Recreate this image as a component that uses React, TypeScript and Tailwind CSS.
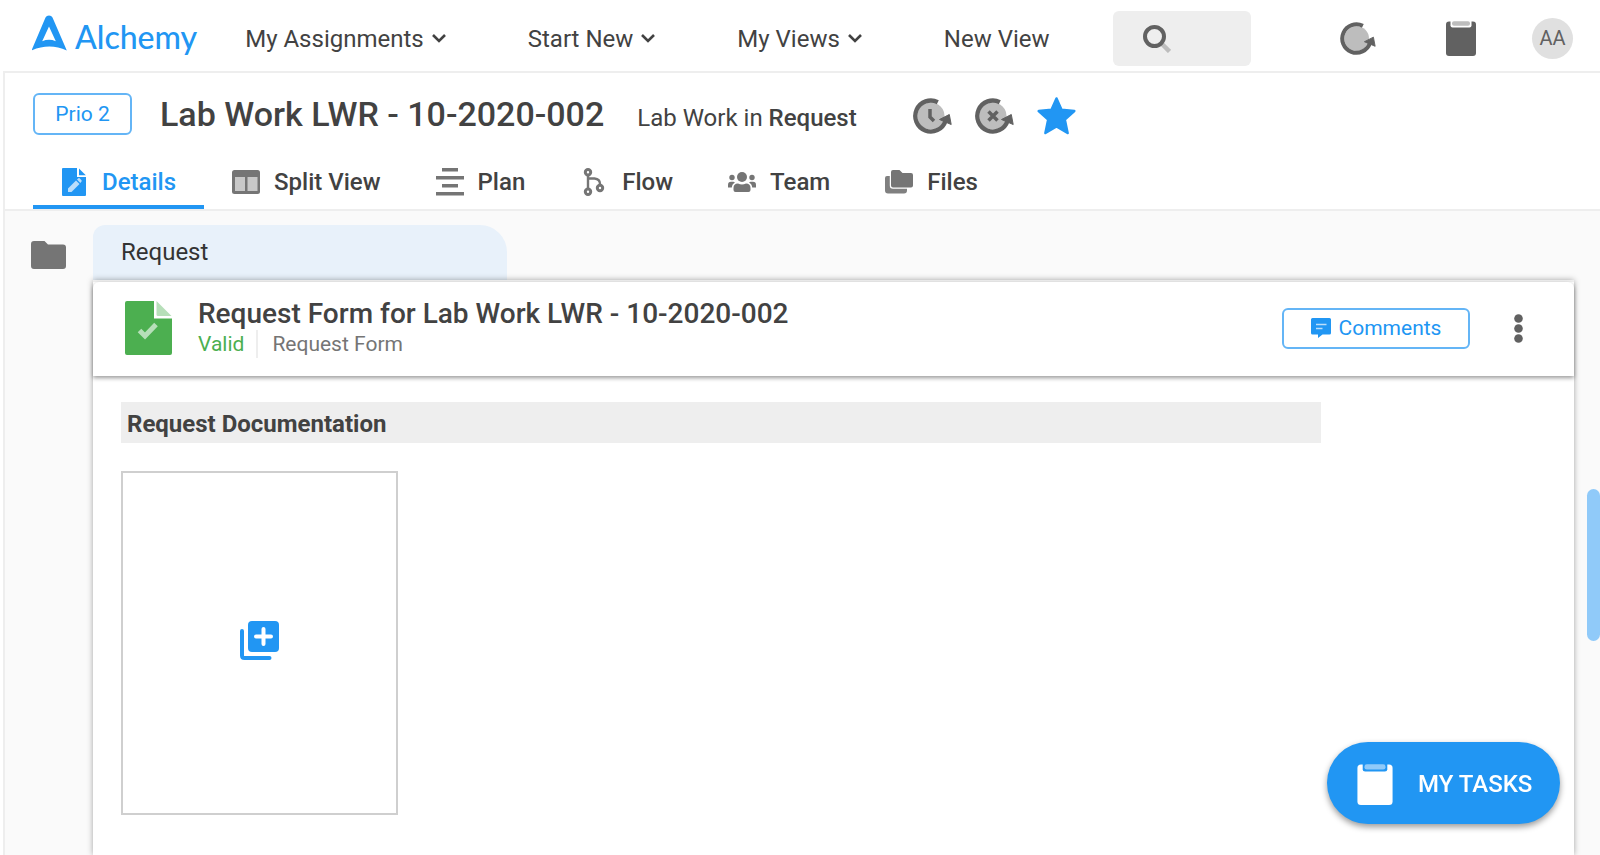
import type { ReactNode } from 'react';

type IconProps = { className?: string };

function LogoMark() {
  return (
    <svg viewBox="0 0 35 36" className="h-9 w-[35px] shrink-0" aria-hidden="true">
      <path
        fillRule="evenodd"
        fill="#2196f3"
        d="M13.500 2.500Q14.500 0.500 17 0.500Q19.500 0.500 20.500 2.500L34.800 35.500Q17.500 27.500 -0.500 35.500ZM17 11.500L10.200 26.200Q17 23.400 23.800 26.200Z"
      />
    </svg>
  );
}

function Chevron() {
  return (
    <svg viewBox="0 0 14 9" className="h-[9px] w-3.5" fill="none" stroke="#424242" strokeWidth="2.6" aria-hidden="true">
      <path d="M1 1L7 7L13 1" />
    </svg>
  );
}

function CycleIcon({ className = 'h-9 w-[39px]', children }: IconProps & { children?: ReactNode }) {
  return (
    <svg viewBox="0 0 39 36" className={className} aria-hidden="true">
      <circle cx="18" cy="18" r="13.500" fill="#bdbdbd" />
      <path d="M24.800 4.200A15.500 15.500 0 1 0 32.500 23" fill="none" stroke="#616161" strokeWidth="4.400" />
      <path d="M36.300 16.500L38.200 26.500L26.500 21.500Z" fill="#616161" stroke="#616161" strokeLinejoin="round" />
      {children}
    </svg>
  );
}

function Clipboard({ body, clip, gap, className }: { body: string; clip: string; gap: string; className: string }) {
  return (
    <svg viewBox="0 0 30 35" className={className} aria-hidden="true">
      <rect y="0.500" width="30" height="34.500" rx="3" fill={body} />
      <path d="M4.500 0H25.500V4.500Q25.500 6.500 23.500 6.500H6.500Q4.500 6.500 4.500 4.500Z" fill={gap} />
      <rect x="6" y="0.300" width="18" height="4.500" rx="2" fill={clip} />
    </svg>
  );
}

function SearchIcon() {
  return (
    <svg viewBox="0 0 28 28" className="size-7 shrink-0" fill="none" aria-hidden="true">
      <path d="M18.500 18.500L26.500 26.500" stroke="#bdbdbd" strokeWidth="4.500" />
      <circle cx="11.500" cy="11.500" r="9.500" stroke="#616161" strokeWidth="4" />
    </svg>
  );
}

function Star() {
  return (
    <svg viewBox="0 0 39 38" className="h-[38px] w-[39px]" aria-hidden="true">
      <path
        d="M19.500 1.500L24.500 12.800L37.300 14L27.800 22.600L30.600 36L19.500 29.500L8.400 36L11.200 22.600L1.700 14L14.500 12.800Z"
        fill="#2196f3"
        stroke="#2196f3"
        strokeWidth="2.500"
        strokeLinejoin="round"
      />
    </svg>
  );
}

function DetailsIcon() {
  return (
    <svg viewBox="0 0 24 28" className="h-7 w-6" aria-hidden="true">
      <path d="M1 0H15V9H24V27Q24 28 23 28H1Q0 28 0 27V1Q0 0 1 0Z" fill="#2196f3" />
      <path d="M17 0.500L23.800 7.200H17Z" fill="#2196f3" />
      <path d="M6 24V20.500L14 12.500L17.500 16L9.500 24Z M15 11.500L16.300 10.200Q17 9.700 17.600 10.200L19.500 12.200Q20 13 19.500 13.500L18.300 15Z" fill="#bbdefb" />
    </svg>
  );
}

function SplitIcon() {
  return (
    <svg viewBox="0 0 28 24" className="h-6 w-7" aria-hidden="true">
      <rect width="28" height="24" rx="2.500" fill="#757575" />
      <rect x="3" y="7" width="10" height="14" fill="#c8c8c8" />
      <rect x="15.500" y="7" width="10" height="14" fill="#c8c8c8" />
    </svg>
  );
}

function PlanIcon() {
  return (
    <svg viewBox="0 0 28 28" className="size-7" stroke="#757575" strokeWidth="3.500" aria-hidden="true">
      <path d="M6 1.800H22M0 9.800H28M6 17.800H22M0 25.800H28" />
    </svg>
  );
}

function FlowIcon() {
  return (
    <svg viewBox="-3.500 0 28 28" className="size-7" fill="none" stroke="#757575" aria-hidden="true">
      <path d="M4.500 7V20M4.500 10.500H11Q16.500 11 16.500 16" strokeWidth="2.400" />
      <circle cx="4.500" cy="4.200" r="2.700" strokeWidth="3" />
      <circle cx="4.500" cy="23.800" r="2.700" strokeWidth="3" />
      <circle cx="16.500" cy="20" r="2.700" strokeWidth="3" />
    </svg>
  );
}

function TeamIcon() {
  return (
    <svg viewBox="0 0 28 20" className="h-5 w-7" fill="#757575" aria-hidden="true">
      <circle cx="14" cy="5" r="5" />
      <circle cx="4" cy="5.500" r="2.700" />
      <circle cx="24" cy="5.500" r="2.700" />
      <path d="M5.500 20V16Q5.500 11.500 10 11.500Q14 13.500 18 11.500Q22.500 11.500 22.500 16V18Q22.500 20 20.500 20H7.500Q5.500 20 5.500 18Z" />
      <path d="M0 15.500V13Q0 9.700 3 9.700H5.500L7 10.500Q4 12 3.800 15.500ZM28 15.500V13Q28 9.700 25 9.700H22.500L21 10.500Q24 12 24.200 15.500Z" />
    </svg>
  );
}

function FilesIcon() {
  return (
    <svg viewBox="0 0 28 24" className="h-6 w-7 overflow-visible" aria-hidden="true">
      <path d="M2 6H8V17H22V20.500Q22 23.500 19 23.500H3Q0 23.500 0 20.500V8Q0 6 2 6Z" fill="#808080" />
      <path d="M8 0H14.500L17.500 3H26Q28 3 28 5V15.500Q28 17.500 26 17.500H8Q6 17.500 6 15.500V2Q6 0 8 0Z" fill="#757575" stroke="#fff" strokeWidth="2.400" paintOrder="stroke" />
    </svg>
  );
}

function FolderIcon() {
  return (
    <svg viewBox="0 0 35 28" className="h-7 w-[35px]" aria-hidden="true">
      <path d="M3 0H13.500L17 3.500H32Q35 3.500 35 6.500V25Q35 28 32 28H3Q0 28 0 25V3Q0 0 3 0Z" fill="#757575" />
    </svg>
  );
}

function ValidFileIcon() {
  return (
    <svg viewBox="0 0 47 54" className="h-[54px] w-[47px] shrink-0" aria-hidden="true">
      <path d="M2 0H29V17.500H47V52Q47 54 45 54H2Q0 54 0 52V2Q0 0 2 0Z" fill="#4caf50" />
      <path d="M31.500 0L46.500 15H33Q31.500 15 31.500 13.500Z" fill="#b7dfb9" />
      <path d="M14.500 29.500L20 35L31 23.500" fill="none" stroke="#b7dfb9" strokeWidth="5" />
    </svg>
  );
}

function CommentIcon() {
  return (
    <svg viewBox="0 0 20 20" className="size-5" aria-hidden="true">
      <path d="M1.500 0H18.500Q20 0 20 1.500V15Q20 16.500 18.500 16.500H11.500L7 20V16.500H1.500Q0 16.500 0 15V1.500Q0 0 1.500 0Z" fill="#2196f3" />
      <path d="M5 6.500H15.500M5 10.500H11.500" stroke="#bbdefb" strokeWidth="1.500" />
    </svg>
  );
}

function AddImageIcon() {
  return (
    <svg viewBox="0 0 39 39" className="size-[39px]" fill="none" strokeLinecap="round" aria-hidden="true">
      <path d="M2 10V34.500Q2 37 4.500 37H29.500" stroke="#2196f3" strokeWidth="4" />
      <rect x="8" width="31" height="31" rx="4" fill="#2196f3" />
      <path d="M23.500 8V23M16 15.500H31" stroke="#fff" strokeWidth="4" />
    </svg>
  );
}

function NavMenu({ label }: { label: string }) {
  return (
    <button type="button" className="flex items-center gap-2 whitespace-nowrap">
      {label}
      <Chevron />
    </button>
  );
}

function Tab({ icon, label, active = false }: { icon: ReactNode; label: string; active?: boolean }) {
  return (
    <a
      href="#"
      aria-current={active ? 'page' : undefined}
      className={
        active
          ? 'flex items-center gap-4 border-b-4 border-[#2196f3] pt-1 pr-7 pl-[29px] text-[#2196f3]'
          : 'flex items-center gap-3.5 border-b-4 border-transparent pt-1 pr-[27px] pl-7'
      }
    >
      {icon}
      {label}
    </a>
  );
}

export default function App() {
  return (
    <div className="flex h-screen flex-col overflow-hidden bg-white font-['Roboto',sans-serif] text-2xl text-[#424242]">
      <header className="flex h-[71px] shrink-0 items-center pt-1.5 pr-[27px] pl-8">
        <a href="#" className="-mt-1.5 flex items-start gap-2 self-start pt-[15px] text-[#2196f3]">
          <LogoMark />
          <span className="pt-1 font-['Lato',sans-serif] text-[32px] leading-9 font-medium">Alchemy</span>
        </a>
        <nav className="ml-12 flex items-center gap-[82px]">
          <NavMenu label="My Assignments" />
          <NavMenu label="Start New" />
          <NavMenu label="My Views" />
          <a href="#" className="whitespace-nowrap">New View</a>
        </nav>
        <label className="ml-auto flex h-[55px] w-[138px] items-center gap-2.5 rounded-md bg-[#eeeeee] pl-[30px]">
          <SearchIcon />
          <input type="search" aria-label="Search" className="w-full min-w-0 bg-transparent outline-none" />
        </label>
        <button type="button" aria-label="Recent" className="ml-[89px]">
          <CycleIcon className="h-[33px] w-9" />
        </button>
        <button type="button" aria-label="Tasks" className="ml-[70px]">
          <Clipboard body="#616161" clip="#bdbdbd" gap="#fff" className="h-[35px] w-[30px]" />
        </button>
        <button type="button" className="ml-14 size-[41px] rounded-full bg-[#e0e0e0] pb-0.5 text-xl text-[#616161]">AA</button>
      </header>

      <div className="ml-[3px] flex min-h-0 grow flex-col border-t-2 border-l-2 border-[#eeeeee] bg-[#fafafa]">
        <section className="shrink-0 border-b-2 border-[#eeeeee] bg-white pl-7">
          <div className="flex h-[82px] items-center">
            <button type="button" className="h-[42px] w-[99px] rounded-md border-2 border-[#64b5f6] text-[21px] text-[#2196f3]">Prio 2</button>
            <h1 className="ml-7 pt-0.5 text-[34px] font-medium whitespace-nowrap">Lab Work LWR - 10-2020-002</h1>
            <p className="ml-[33px] pt-2 whitespace-nowrap">
              Lab Work in <span className="font-medium">Request</span>
            </p>
            <div className="ml-14 flex items-center gap-[23px] pt-1">
              <button type="button" aria-label="Postpone">
                <CycleIcon>
                  <path d="M17 11V19L21 23" fill="none" stroke="#616161" strokeWidth="3.500" />
                </CycleIcon>
              </button>
              <button type="button" aria-label="Cancel">
                <CycleIcon>
                  <path d="M13.500 13.500L22.500 22.500M22.500 13.500L13.500 22.500" stroke="#616161" strokeWidth="3.500" />
                </CycleIcon>
              </button>
              <button type="button" aria-label="Favorite">
                <Star />
              </button>
            </div>
          </div>
          <nav className="flex h-[54px] font-medium">
            <Tab active icon={<DetailsIcon />} label="Details" />
            <Tab icon={<SplitIcon />} label="Split View" />
            <Tab icon={<PlanIcon />} label="Plan" />
            <Tab icon={<FlowIcon />} label="Flow" />
            <Tab icon={<TeamIcon />} label="Team" />
            <Tab icon={<FilesIcon />} label="Files" />
          </nav>
        </section>

        <div className="flex min-h-0 grow pt-3.5 pl-[26px]">
          <button type="button" aria-label="Folders" className="mt-4 mr-[27px] self-start">
            <FolderIcon />
          </button>
          <main className="flex min-w-0 grow flex-col">
            <div className="flex h-[55px] w-[414px] shrink-0 items-center rounded-tl-xl rounded-tr-[27px] bg-[#e8f1fa] pb-0.5 pl-7 text-[#333]">Request</div>
            <div className="grow border-t-2 border-[#eeeeee] bg-white shadow-[0_0_6px_rgba(0,0,0,0.35)]">
              <div className="flex h-[94px] items-center rounded-t-md pr-[51px] pb-0.5 pl-8 shadow-[0_2px_4px_rgba(0,0,0,0.4)]">
                <ValidFileIcon />
                <div className="ml-[26px] flex flex-col">
                  <h2 className="text-[28px] leading-8 font-medium whitespace-nowrap">Request Form for Lab Work LWR - 10-2020-002</h2>
                  <div className="flex items-center text-[21px] leading-7 text-[#757575]">
                    <span className="border-r-2 border-[#eeeeee] pr-3 text-[#4caf50]">Valid</span>
                    <span className="pl-3.5">Request Form</span>
                  </div>
                </div>
                <button type="button" className="ml-auto flex h-[41px] w-[188px] items-center justify-center gap-2 rounded-md border-2 border-[#64b5f6] text-[21px] text-[#2196f3]">
                  <CommentIcon />
                  Comments
                </button>
                <button type="button" aria-label="More" className="ml-11">
                  <svg viewBox="0 0 9 29" className="h-[29px] w-[9px]" fill="#616161" aria-hidden="true">
                    <circle cx="4.500" cy="4.500" r="4.300" />
                    <circle cx="4.500" cy="14.500" r="4.300" />
                    <circle cx="4.500" cy="24.500" r="4.300" />
                  </svg>
                </button>
              </div>
              <div className="pt-[26px] pr-[253px] pl-7">
                <h3 className="flex h-[41px] items-center bg-[#eeeeee] pt-0.5 pl-1.5 font-bold">Request Documentation</h3>
                <button type="button" aria-label="Add image" className="mt-7 flex h-[344px] w-[277px] items-center justify-center border-2 border-[#cfcfcf] pb-1.5">
                  <AddImageIcon />
                </button>
              </div>
            </div>
          </main>
          <aside className="flex w-[26px] shrink-0 justify-end pt-[264px]">
            <div className="h-[152px] w-[13px] rounded-full bg-[#90caf9]" />
          </aside>
        </div>
      </div>

      <button
        type="button"
        className="fixed right-10 bottom-[31px] flex h-[82px] w-[233px] items-center gap-[25px] rounded-full bg-[#2196f3] pt-0.5 pl-[30px] font-medium text-white shadow-[0_3px_6px_rgba(0,0,0,0.4)]"
      >
        <Clipboard body="#fff" clip="#90caf9" gap="#2196f3" className="h-[41px] w-9" />
        MY TASKS
      </button>
    </div>
  );
}
